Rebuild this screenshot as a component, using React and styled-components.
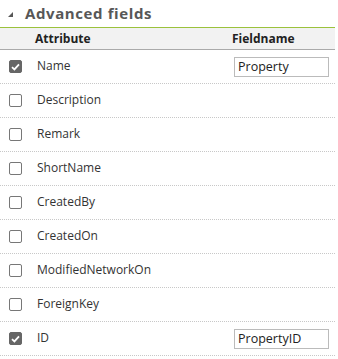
import { createGlobalStyle, styled } from 'styled-components';

const GlobalStyle = createGlobalStyle`
  body {
    margin: 0;
    background: #fff;
    font-family: "Open Sans", "Liberation Sans", sans-serif;
  }
`;

const Panel = styled.div`
  width: 335px;
`;

const Title = styled.div`
  display: flex;
  align-items: center;
  height: 26px;
  padding-bottom: 1px;
  border-bottom: 1px solid #9bc23c;
  color: #575757;
  font-size: 15px;
  font-weight: 700;
  letter-spacing: 0.6px;
`;

const Caret = styled.span`
  width: 0;
  height: 0;
  margin: 2px 12px 0 8px;
  border-style: solid;
  border-width: 0 0 5px 5px;
  border-color: transparent transparent #575757 transparent;
`;

const Grid = styled.div`
  display: grid;
  grid-template-columns: 35px 197px 1fr;
  align-items: center;
`;

const HeadRow = styled(Grid)`
  height: 21px;
  background: #f2f2f2;
  border-bottom: 1px solid #aaa;
  font-size: 12px;
  font-weight: 700;
  color: #222;
`;

const Row = styled(Grid)`
  height: 33px;
  border-bottom: 1px dotted #c8c8c8;
  font-size: 12px;
  color: #333;
`;

const Box = styled.span`
  box-sizing: border-box;
  display: flex;
  align-items: center;
  justify-content: center;
  width: 13px;
  height: 13px;
  margin-left: 9px;
  border-radius: 2px;
  border: 1px solid ${(p) => (p.checked ? '#666' : '#777')};
  background: ${(p) => (p.checked ? '#666' : '#fff')};
`;

const Label = styled.span`
  padding-left: 2px;
  margin-top: -2px;
`;

const Field = styled.input`
  box-sizing: border-box;
  width: 95px;
  height: 20px;
  margin-left: 2px;
  padding: 0 3px;
  border: 1px solid #bbb;
  font-family: inherit;
  font-size: 12.5px;
  color: #222;
  outline: none;
`;

const fields = [
  { name: 'Name', checked: true, value: 'Property' },
  { name: 'Description' },
  { name: 'Remark' },
  { name: 'ShortName' },
  { name: 'CreatedBy' },
  { name: 'CreatedOn' },
  { name: 'ModifiedNetworkOn' },
  { name: 'ForeignKey' },
  { name: 'ID', checked: true, value: 'PropertyID' },
];

function Check({ checked }) {
  return (
    <Box checked={checked}>
      {checked && (
        <svg width="9" height="8" viewBox="0 0 9 8">
          <path d="M1 4.2 L3.4 6.4 L8 1.4" fill="none" stroke="#fff" strokeWidth="1.8" />
        </svg>
      )}
    </Box>
  );
}

export default function App() {
  return (
    <Panel>
      <GlobalStyle />
      <Title>
        <Caret />
        Advanced fields
      </Title>
      <HeadRow>
        <span />
        <span>Attribute</span>
        <span>Fieldname</span>
      </HeadRow>
      {fields.map((f) => (
        <Row key={f.name}>
          <Check checked={!!f.checked} />
          <Label>{f.name}</Label>
          <span>{f.checked && <Field defaultValue={f.value} />}</span>
        </Row>
      ))}
    </Panel>
  );
}
